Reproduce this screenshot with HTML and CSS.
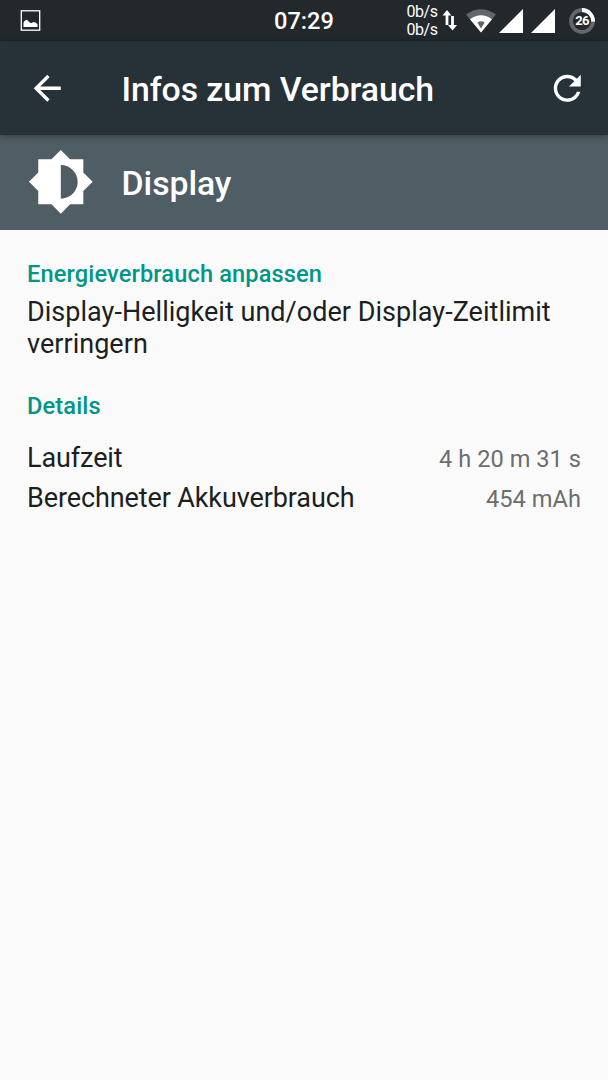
FILE: index.html
```html
<!DOCTYPE html>
<html lang="de">
<head>
<meta charset="utf-8">
<title>Infos zum Verbrauch</title>
<link rel="stylesheet" href="styles.css">
</head>
<body>
<header class="status-bar">
  <svg class="status-picture" viewBox="0 0 20 21">
    <rect x=".8" y=".8" width="18.4" height="19.4" fill="none" stroke="#fff" stroke-width="1.300"/>
    <path fill="#fff" d="M3 17v-4.500l1.500-2 2-.700 3 2.900 1.500.300 2-1 2 .500 2 1.500v3z"/>
  </svg>
  <time class="clock">07:29</time>
  <div class="status-icons">
    <div class="net-speed"><span>0b/s</span><span>0b/s</span></div>
    <svg class="traffic" viewBox="0 0 15 23" fill="#fff">
      <path d="M5 1l4.500 5.500H6.400V16H3.600V6.500H.5z"/>
      <path d="M10.500 21.500L6 16h3.100V7h2.800v9h3.100z"/>
    </svg>
    <svg class="wifi" viewBox="0 0 30 24">
      <path fill="#61676a" d="M15 23.500L0 5.500Q15-5 30 5.500z"/>
      <path fill="#fff" d="M15 23.500L4 10.200Q15 2.500 26 10.200z"/>
      <path fill="#61676a" d="M15 19.500L11.300 13.500Q15 11.200 18.700 13.500z"/>
    </svg>
    <svg class="signal" viewBox="0 0 24 24"><path fill="#fff" d="M24 0v24H0z"/></svg>
    <svg class="signal" viewBox="0 0 24 24"><path fill="#fff" d="M24 0v24H0z"/></svg>
    <div class="battery">
      <svg class="battery-ring" viewBox="0 0 26 26" fill="none" stroke-width="3.800">
        <circle cx="13" cy="13" r="11" stroke="#61676a"/>
        <path d="M13 2A11 11 0 0 1 24 13.700" stroke="#fff"/>
      </svg>
      <span class="battery-level">26</span>
    </div>
  </div>
</header>
<nav class="toolbar">
  <svg class="action" viewBox="0 0 24 24"><path d="M20 11H7.830l5.590-5.590L12 4l-8 8 8 8 1.410-1.410L7.830 13H20v-2z"/></svg>
  <h1 class="title">Infos zum Verbrauch</h1>
  <svg class="action" viewBox="0 0 24 24"><path d="M17.650 6.350C16.200 4.900 14.210 4 12 4c-4.420 0-7.990 3.580-7.990 8s3.570 8 7.990 8c3.730 0 6.840-2.550 7.730-6h-2.080c-.820 2.330-3.040 4-5.650 4-3.310 0-6-2.690-6-6s2.690-6 6-6c1.660 0 3.140.690 4.220 1.780L13 11h7V4l-2.350 2.350z"/></svg>
</nav>
<section class="entry">
  <svg class="entry-icon" viewBox="0 0 24 24"><path d="M20 15.310L23.310 12 20 8.690V4h-4.690L12 .690 8.690 4H4v4.690L.690 12 4 15.310V20h4.690L12 23.310 15.310 20H20v-4.690zM12 18V6c3.310 0 6 2.690 6 6s-2.690 6-6 6z"/></svg>
  <h2 class="title">Display</h2>
</section>
<main class="content">
  <h3 class="category">Energieverbrauch anpassen</h3>
  <p class="advice">Display-Helligkeit und/oder Display-Zeitlimit verringern</p>
  <h3 class="category">Details</h3>
  <dl class="details">
    <div class="row"><dt>Laufzeit</dt><dd>4 h 20 m 31 s</dd></div>
    <div class="row"><dt>Berechneter Akkuverbrauch</dt><dd>454 mAh</dd></div>
  </dl>
</main>
</body>
</html>
```
FILE: styles.css
```css
* { box-sizing: border-box; margin: 0; padding: 0; }
body {
  width: 608px;
  min-height: 1080px;
  background: #fafafa;
  color: #1c1f20;
  font-family: Roboto, sans-serif;
}
svg { display: block; flex: none; }

.status-bar {
  display: grid;
  grid-template-columns: 254px auto 1fr;
  align-items: center;
  height: 41px;
  padding: 0 13px 0 20px;
  background: #22282b;
  color: #fff;
}
.status-picture { width: 21px; height: 21px; }
.clock { padding-top: 2px; font-size: 23.600px; font-weight: 500; line-height: 39px; }
.status-icons { display: flex; align-items: center; justify-content: flex-end; }
.net-speed {
  display: flex;
  flex-direction: column;
  margin-right: 4px;
  font-size: 16px;
  letter-spacing: -.45px;
  line-height: 18px;
}
.traffic { width: 15px; height: 23px; margin-right: 9px; }
.wifi { width: 30px; height: 24px; margin-right: 3.500px; }
.signal { width: 24px; height: 24px; margin-right: 8px; }
.battery { display: grid; place-items: center; width: 26px; height: 26px; margin-left: 6px; }
.battery-ring, .battery-level { grid-area: 1 / 1; }
.battery-ring { width: 26px; height: 26px; }
.battery-level { font-size: 13px; font-weight: 700; letter-spacing: -.6px; line-height: 26px; }

.toolbar {
  position: relative;
  display: flex;
  align-items: center;
  height: 94px;
  padding: 0 20.500px 0 27px;
  background: #263238;
  color: #fff;
  box-shadow: 0 2px 7px rgba(0, 0, 0, .3);
}
.action { width: 40.500px; height: 40.500px; fill: #fff; }
.title {
  padding-top: 3px;
  font-size: 33.800px;
  font-weight: 500;
  letter-spacing: -.07px;
  line-height: 40px;
}
.toolbar .title { flex: 1; margin-left: 54px; }

.entry {
  display: flex;
  align-items: center;
  height: 94.500px;
  padding-left: 27px;
  background: #4f5d64;
  color: #fff;
}
.entry-icon { width: 67.600px; height: 67.600px; fill: #fff; }
.entry .title { margin-left: 27px; }

.content { padding: 30px 27px 0; }
.category {
  color: #009688;
  font-size: 23.600px;
  font-weight: 500;
  letter-spacing: .13px;
  line-height: 28px;
}
.advice { margin: 8px 0 32.500px; font-size: 27px; letter-spacing: .03px; line-height: 32px; }
.details { margin-top: 17.500px; font-size: 27px; }
.row { display: flex; align-items: baseline; justify-content: space-between; height: 40px; line-height: 40px; }
.row dt { letter-spacing: -.11px; }
.row dd { color: #6b6d6e; font-size: 23.600px; letter-spacing: .04px; }
```
